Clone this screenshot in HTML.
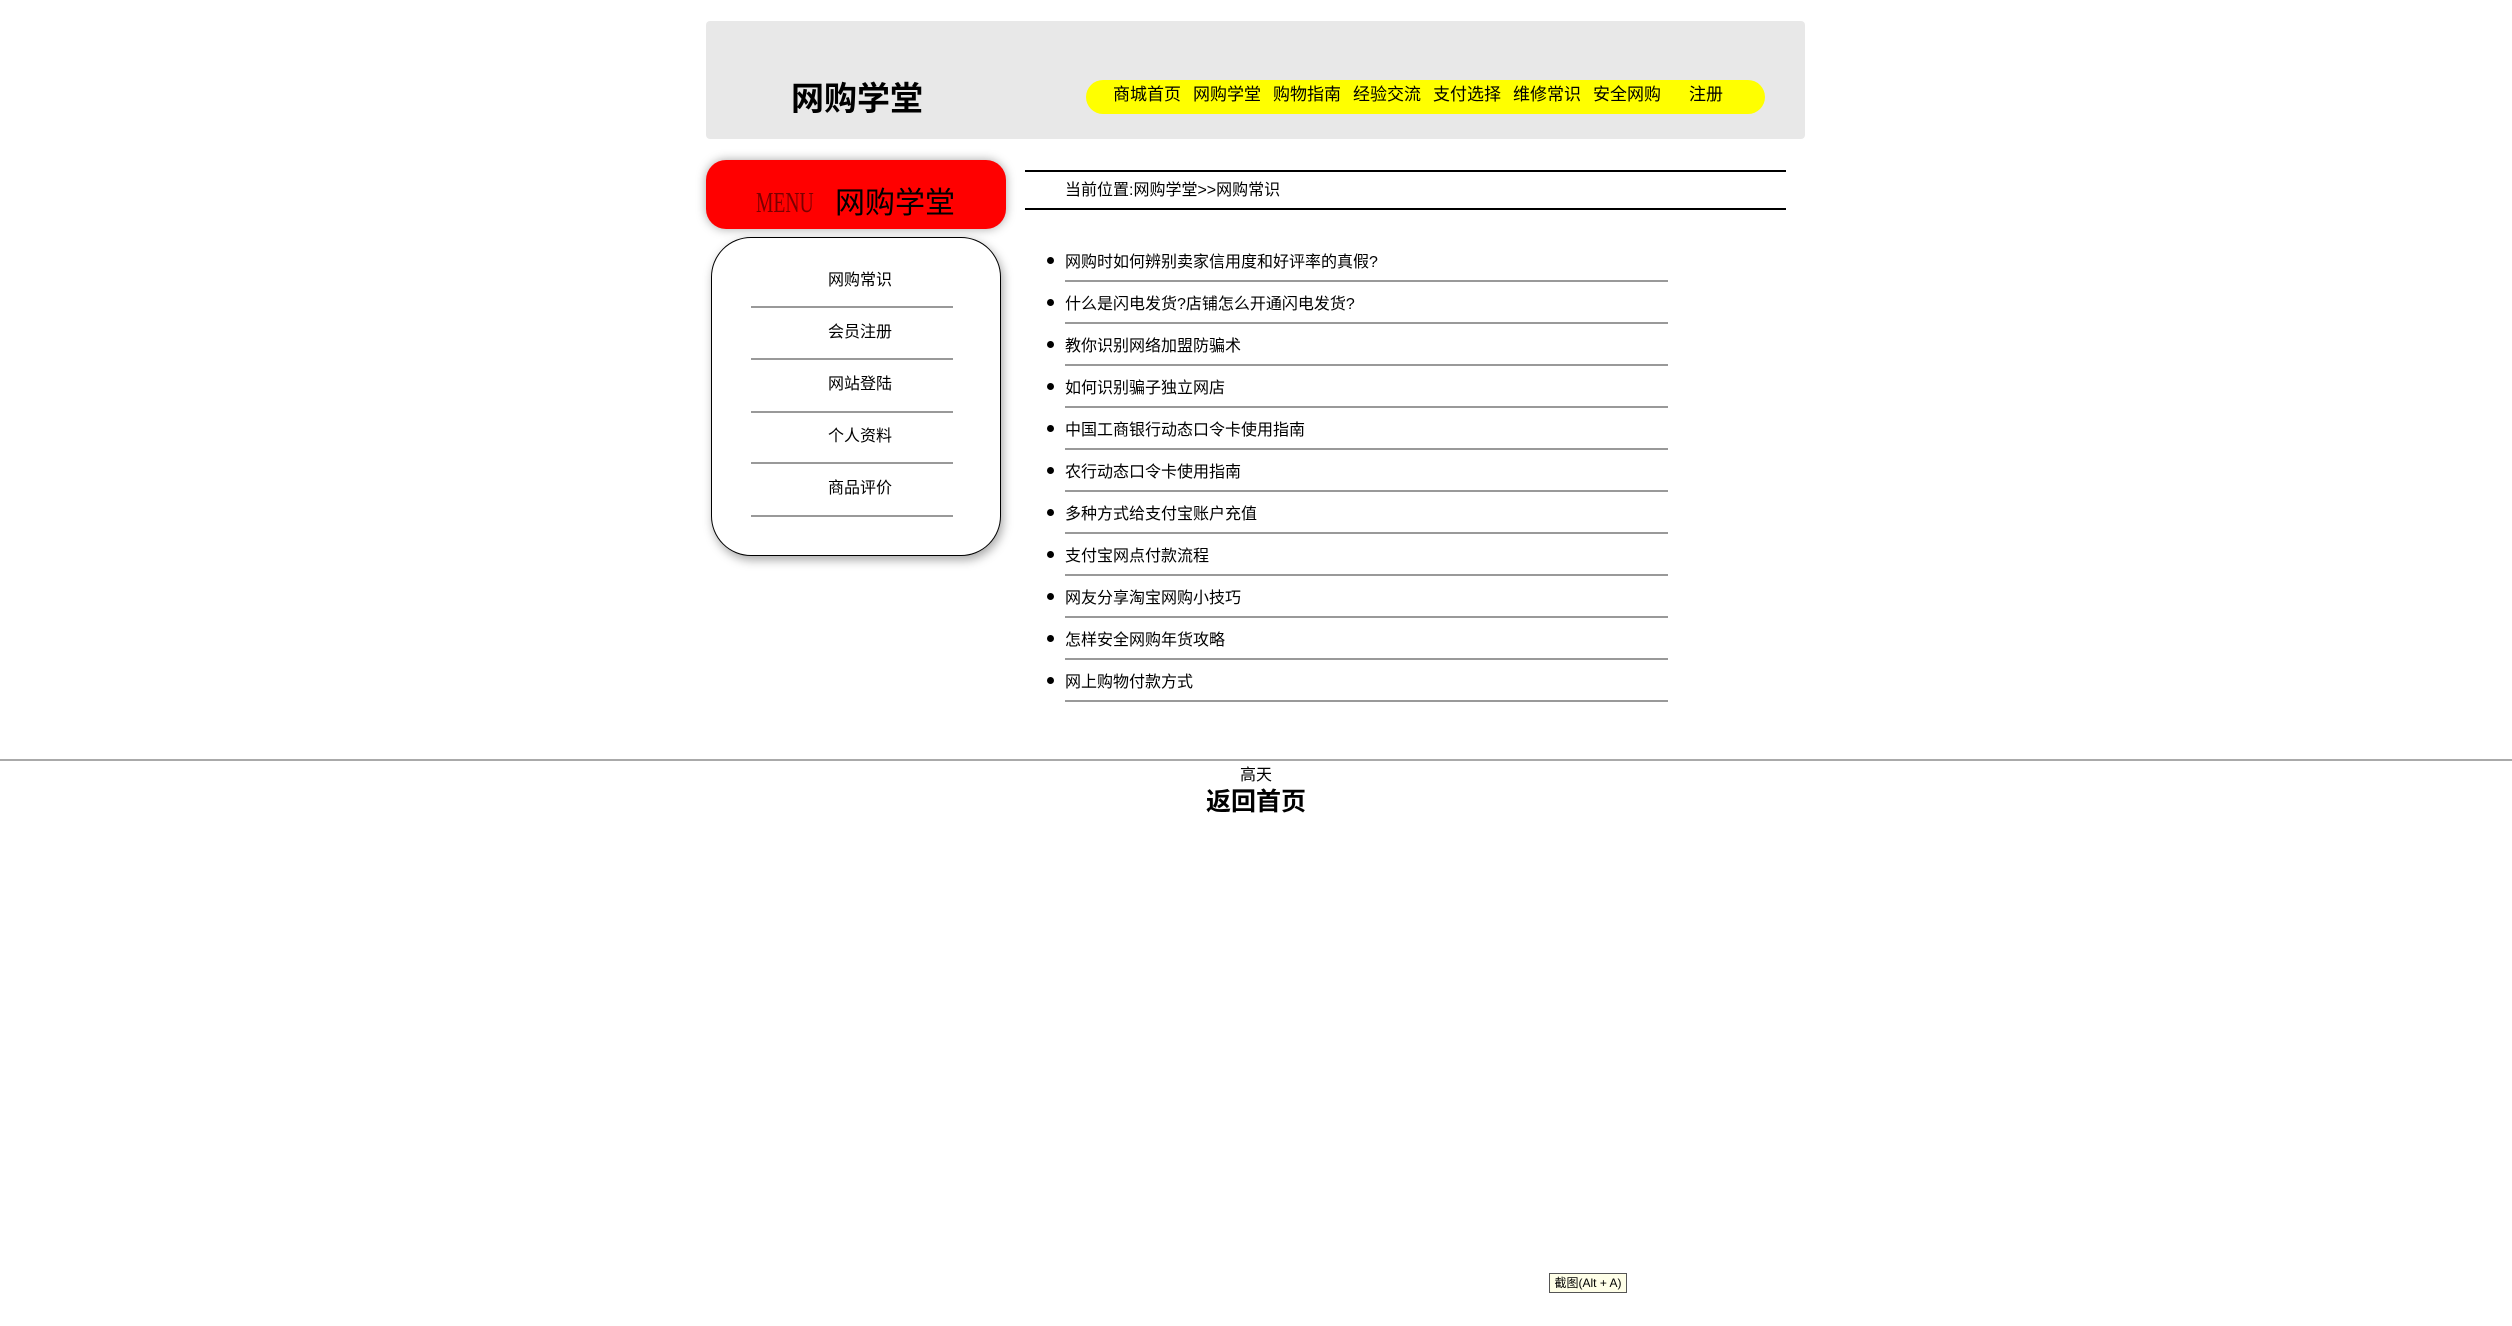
<!DOCTYPE html>
<html><head><meta charset="utf-8"><style>
body{margin:0;width:2512px;height:1326px;position:relative;background:#fff;font-family:"Liberation Sans","Noto Sans CJK SC",sans-serif;color:#000;overflow:hidden}
.a{position:absolute;white-space:nowrap}
.hdr{left:706px;top:21px;width:1099px;height:118px;background:#e8e8e8;border-radius:4px}
.pill{left:1086px;top:80px;width:679px;height:34px;background:#ff0;border-radius:17px}
.nav{top:83px;font-size:17px;line-height:24px}
.red{left:706px;top:160px;width:300px;height:69px;background:#f00;border-radius:20px;box-shadow:0 0 10px rgba(0,0,0,.35)}
.menu{left:711px;top:237px;width:288px;height:317px;border:1px solid #000;border-radius:40px;box-shadow:2px 4px 10px rgba(0,0,0,.35);background:#fff}
.mi{width:200px;left:760px;text-align:center;font-size:16px}
.ml{left:751px;width:202px;height:2px;background:#999}
.li{left:1065px;font-size:16px}
.ll{left:1065px;width:603px;height:2px;background:#999}
.bu{left:1047px;width:7px;height:7px;border-radius:50%;background:#000}
</style></head><body>
<div class="a hdr"></div>
<div class="a" style="left:791px;top:77px;font-size:33px;font-weight:bold;line-height:44px">网购学堂</div>
<div class="a pill"></div>
<div class="a nav" style="left:1113px">商城首页</div>
<div class="a nav" style="left:1193px">网购学堂</div>
<div class="a nav" style="left:1273px">购物指南</div>
<div class="a nav" style="left:1353px">经验交流</div>
<div class="a nav" style="left:1433px">支付选择</div>
<div class="a nav" style="left:1513px">维修常识</div>
<div class="a nav" style="left:1593px">安全网购</div>
<div class="a nav" style="left:1689px">注册</div>
<div class="a red"></div>
<div class="a" style="left:756px;top:188px;font-size:28px;color:#7a0000;font-family:'Liberation Serif',serif;transform:scaleX(.7);transform-origin:left">MENU</div>
<div class="a" style="left:835px;top:184px;font-size:30px;line-height:40px">网购学堂</div>
<div class="a menu"></div>
<div class="a mi" style="top:266px">网购常识</div>
<div class="a ml" style="top:306px"></div>
<div class="a mi" style="top:318px">会员注册</div>
<div class="a ml" style="top:358px"></div>
<div class="a mi" style="top:370px">网站登陆</div>
<div class="a ml" style="top:411px"></div>
<div class="a mi" style="top:422px">个人资料</div>
<div class="a ml" style="top:462px"></div>
<div class="a mi" style="top:474px">商品评价</div>
<div class="a ml" style="top:515px"></div>
<div class="a" style="left:1025px;top:170px;width:761px;height:2px;background:#000"></div>
<div class="a" style="left:1065px;top:176px;font-size:16px">当前位置:网购学堂&gt;&gt;网购常识</div>
<div class="a" style="left:1025px;top:208px;width:761px;height:2px;background:#000"></div>

<div class="a bu" style="top:257px"></div><div class="a li" style="top:248px">网购时如何辨别卖家信用度和好评率的真假?</div><div class="a ll" style="top:280px"></div>
<div class="a bu" style="top:299px"></div><div class="a li" style="top:290px">什么是闪电发货?店铺怎么开通闪电发货?</div><div class="a ll" style="top:322px"></div>
<div class="a bu" style="top:341px"></div><div class="a li" style="top:332px">教你识别网络加盟防骗术</div><div class="a ll" style="top:364px"></div>
<div class="a bu" style="top:383px"></div><div class="a li" style="top:374px">如何识别骗子独立网店</div><div class="a ll" style="top:406px"></div>
<div class="a bu" style="top:425px"></div><div class="a li" style="top:416px">中国工商银行动态口令卡使用指南</div><div class="a ll" style="top:448px"></div>
<div class="a bu" style="top:467px"></div><div class="a li" style="top:458px">农行动态口令卡使用指南</div><div class="a ll" style="top:490px"></div>
<div class="a bu" style="top:509px"></div><div class="a li" style="top:500px">多种方式给支付宝账户充值</div><div class="a ll" style="top:532px"></div>
<div class="a bu" style="top:551px"></div><div class="a li" style="top:542px">支付宝网点付款流程</div><div class="a ll" style="top:574px"></div>
<div class="a bu" style="top:593px"></div><div class="a li" style="top:584px">网友分享淘宝网购小技巧</div><div class="a ll" style="top:616px"></div>
<div class="a bu" style="top:635px"></div><div class="a li" style="top:626px">怎样安全网购年货攻略</div><div class="a ll" style="top:658px"></div>
<div class="a bu" style="top:677px"></div><div class="a li" style="top:668px">网上购物付款方式</div><div class="a ll" style="top:700px"></div>

<div class="a" style="left:0;top:759px;width:2512px;height:2px;background:#aaa"></div>
<div class="a" style="left:0;width:2512px;text-align:center;top:761px;font-size:16px">高天</div>
<div class="a" style="left:0;width:2512px;text-align:center;top:782px;font-size:25px;font-weight:bold">返回首页</div>
<div class="a" style="left:1549px;top:1273px;width:76px;height:18px;border:1px solid #555;background:#ffffe8;font-size:12px;line-height:18px;text-align:center">截图(Alt + A)</div>
</body></html>
